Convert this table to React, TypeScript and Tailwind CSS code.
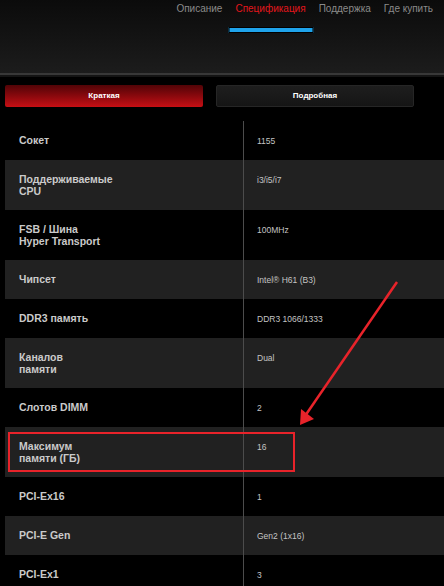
import React from "react";

interface SpecRow {
  label: string;
  value: string;
}

const rows: SpecRow[] = [
  { label: "Сокет", value: "1155" },
  { label: "Поддерживаемые\nCPU", value: "i3/i5/i7" },
  { label: "FSB / Шина\nHyper Transport", value: "100MHz" },
  { label: "Чипсет", value: "Intel® H61 (B3)" },
  { label: "DDR3 память", value: "DDR3 1066/1333" },
  { label: "Каналов\nпамяти", value: "Dual" },
  { label: "Слотов DIMM", value: "2" },
  { label: "Максимум\nпамяти (ГБ)", value: "16" },
  { label: "PCI-Ex16", value: "1" },
  { label: "PCI-E Gen", value: "Gen2 (1x16)" },
  { label: "PCI-Ex1", value: "3" },
];

const nav = ["Описание", "Спецификация", "Поддержка", "Где купить"];

export default function App() {
  return (
    <div
      className="relative w-[444px] h-[586px] overflow-hidden bg-black"
      style={{ fontFamily: '"Liberation Sans", Arial, sans-serif' }}
    >
      <header className="h-[73px] bg-gradient-to-b from-[#0b0b0b] to-[#1c1c1c]">
        <nav className="flex justify-end gap-[13px] pr-[11px] pt-[3px]">
          {nav.map((item) => {
            const active = item === "Спецификация";
            return (
              <span
                key={item}
                className={`relative text-[10px] leading-[12px] ${active ? "text-[#e3161c]" : "text-[#8a8a8a]"}`}
              >
                {item}
                {active && (
                  <span className="absolute left-1/2 top-[24px] -translate-x-1/2 w-[85px] h-[6px] bg-[#1fa3ea] border border-black" />
                )}
              </span>
            );
          })}
        </nav>
      </header>
      <div className="h-[2px] bg-[#383838]" />
      <div className="h-[2px] bg-[#141414]" />

      <div className="flex gap-[13px] pl-[5px] mt-[8px]">
        <button className="w-[198px] h-[22px] rounded-[2px] bg-gradient-to-b from-[#520407] to-[#c70f14] text-white font-bold text-[8px]">
          Краткая
        </button>
        <button className="w-[198px] h-[22px] rounded-[2px] bg-gradient-to-b from-[#1e1e1e] to-[#151515] border border-[#262626] text-white font-bold text-[8px]">
          Подробная
        </button>
      </div>

      <div className="mt-[14px] ml-[5px]">
        {rows.map((row, i) => (
          <div
            key={row.label}
            className={`flex min-h-[39px] ${i % 2 === 1 ? "bg-[#212121]" : "bg-black"}`}
          >
            <div className="w-[238px] shrink-0 pl-[14px] py-[13px] whitespace-pre-line text-[10.5px] leading-[12px] font-bold text-[#cacaca]">
              {row.label}
            </div>
            <div className="flex-1 border-l border-[#4c4c4c] pl-[13px] pt-[14px] text-[8.5px] leading-[12px] text-[#c4c4c4]">
              {row.value}
            </div>
          </div>
        ))}
      </div>

      {/* annotation */}
      <div className="absolute left-[8px] top-[432px] w-[287px] h-[40px] border-2 border-[#e8232a]" />
      <svg className="absolute left-0 top-0 pointer-events-none" width="444" height="586">
        <line x1="397" y1="282" x2="305" y2="416" stroke="#e8232a" strokeWidth="2.5" />
        <polygon points="300,425 301,409 314,419" fill="#e8232a" />
      </svg>
    </div>
  );
}
